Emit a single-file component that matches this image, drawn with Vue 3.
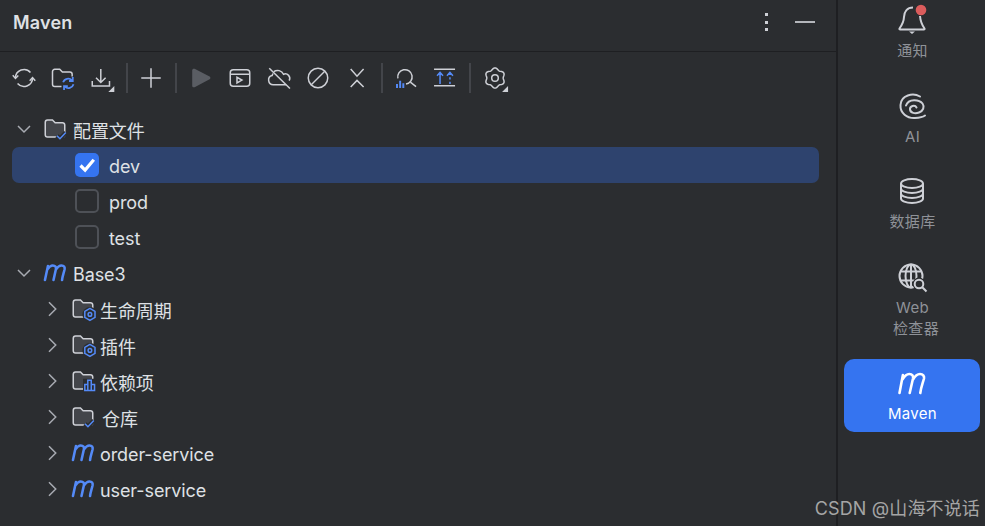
<template>
  <div class="window">
    <section class="panel">
      <header class="panel-head">
        <h1>Maven</h1>
        <div class="dots"><i></i><i></i><i></i></div>
        <div class="minimize"></div>
      </header>

      <div class="toolbar">
        <template v-for="(tool, i) in tools" :key="i">
          <span v-if="tool === '|'" class="sep"></span>
          <button v-else class="tool">
            <svg width="24" height="24" viewBox="0 0 16 16" fill="none" v-html="icons[tool]"></svg>
          </button>
        </template>
      </div>

      <ul class="tree">
        <li v-for="row in rows" :key="row.label" class="row" :class="[`level-${row.level}`, { selected: row.selected }]">
          <svg v-if="row.open !== undefined" class="chevron" width="24" height="24" viewBox="0 0 16 16" fill="none" stroke="#a8abb2" stroke-width="1">
            <path v-if="row.open" d="M4 6l4 4 4-4" />
            <path v-else d="M6 3.500l4.500 4.500-4.500 4.500" />
          </svg>
          <span v-if="row.check !== undefined" class="box" :class="{ on: row.check }">
            <svg v-if="row.check" width="24" height="24" viewBox="0 0 24 24" fill="none" stroke="#fff" stroke-width="3.2">
              <path d="M5.500 12.500l4.600 4.600L18.800 6.800" />
            </svg>
          </span>
          <svg v-if="row.icon" class="node-icon" width="24" height="24" viewBox="0 0 16 16" fill="none" v-html="icons[row.icon]"></svg>
          <span class="label" :class="{ spaced: row.spaced }">{{ row.label }}</span>
        </li>
      </ul>
    </section>

    <aside class="rail">
      <div v-for="item in rail" :key="item.icon" class="rail-item" :class="{ active: item.active }">
        <svg width="28" height="28" viewBox="0 0 28 28" fill="none" v-html="icons[item.icon]"></svg>
        <span v-for="(text, i) in item.lines" :key="i" class="rail-label" :class="{ shifted: i > 0 }">{{ text }}</span>
      </div>
    </aside>

    <div class="watermark">CSDN @山海不说话</div>
  </div>
</template>

<script setup>
const line = `stroke="#ced0d6" stroke-width="1"`;
const blue = `stroke="#548af7" stroke-width="1"`;
const rail2 = `stroke="#ced0d6" stroke-width="2"`;
const folder = `<path d="M1.500 3.500A1.500 1.500 0 0 1 3 2h3.300l1.800 1.800H13a1.500 1.500 0 0 1 1.500 1.500v6.500A1.500 1.500 0 0 1 13 13.300H3a1.500 1.500 0 0 1-1.500-1.500Z" fill="#43454a" stroke="#ced0d6" stroke-width="1"/>`;
const check = `<path d="M9.300 12.500 11.300 14.500 15.200 10.300" stroke="#2b2d30" stroke-width="3"/><path d="M9.300 12.500 11.300 14.500 15.200 10.300" ${blue}/>`;
const moduleM = `M1.300 12.700 3.300 3.400M3 5.600C4 4 5.200 3 6.500 3 8.200 3 8.900 4 8.600 5.500L7 12.700M8.700 5.600C9.700 4 10.900 3 12.300 3 14 3 14.700 4 14.400 5.500 13.700 8.500 12.900 10.500 12.700 12.700`;
const corner = (x, y) => `<path d="M${x} ${y}h4v-4Z" fill="#ced0d6"/>`;

// six-lobed outline for the settings cog
const cog = Array.from({ length: 72 }, (_, i) => {
  const a = (i * Math.PI) / 36;
  const r = 6.1 + 0.65 * Math.cos(6 * a);
  return `${(8 + r * Math.sin(a)).toFixed(2)} ${(8 - r * Math.cos(a)).toFixed(2)}`;
}).join("L");

const badgeGear = `<circle cx="12.600" cy="11.700" r="5" fill="#2b2d30"/><path d="M12.600 7.600l3.400 2v4l-3.400 2-3.400-2v-4Z" stroke-linejoin="round" ${blue}/><circle cx="12.600" cy="11.600" r="1.200" ${blue}/>`;

const icons = {
  reload: `<path d="M2.300 8A5.700 5.700 0 0 1 12.300 4.300M13.700 8A5.700 5.700 0 0 1 3.700 11.700" ${line}/><path d="M.5 6.200 2.300 8.300 4.200 6.300M11.800 9.800 13.700 7.700 15.500 9.800" ${line}/>`,
  folderSync: `<path d="M7 13.700H2.500a1.500 1.500 0 0 1-1.500-1.500V3.700A1.500 1.500 0 0 1 2.500 2.200h3.300l1.800 1.800h5a1.500 1.500 0 0 1 1.500 1.500V7" ${line}/><path d="M8.100 10.800A3.500 3.500 0 0 1 14 9.600M15 12.200A3.500 3.500 0 0 1 9.200 13.800" stroke="#548af7" stroke-width="1.200"/><path d="M14.500 7.400V10H12M8.700 16V13.400H11.200" stroke="#548af7" stroke-width="1.200"/>`,
  download: `<path d="M7.200 2v9M4 7.800 7.200 11 10.400 7.800M1.500 10v3.300h11.500V10" ${line}/>${corner(12.200, 17.300)}`,
  plus: `<path d="M8 1.500v13M1.500 8h13" ${line}/>`,
  play: `<path d="M2.800 2.900c0-.9.900-1.400 1.600-1l10 5.100c.7.400.7 1.500 0 1.900l-10 5.200c-.7.400-1.600-.1-1.600-1Z" fill="#5a5d63"/>`,
  console: `<rect x="1.500" y="2.500" width="13" height="11" rx="2" ${line}/><path d="M1.500 5.500h13" ${line}/><path d="M6 7.500v3.800L9.300 9.400Z" ${line}/>`,
  cloudOff: `<path d="M4.500 3.800A4.300 4.300 0 0 1 11 5.500a3 3 0 0 1 3.800 4.200M12.800 12.500H4.200a3.100 3.100 0 0 1-.8-6.100L4 5" ${line}/><path d="M1.500 1.500l13.800 13.500" ${line}/>`,
  ban: `<circle cx="8" cy="8" r="6.500" ${line}/><path d="M3.500 12.500l9-9" ${line}/>`,
  collapse: `<path d="M3.800 2 8 6.800 12.400 2M3.800 14 8 9.600 12.400 14" ${line}/>`,
  analyze: `<path d="M2.600 8.300A4.800 4.800 0 1 1 8 12" ${line}/><path d="M10.900 10.800l3.800 2.900" ${line}/><path d="M2 14.700V12M4.100 14.700V9.800M6.200 14.700V11.500" stroke="#548af7" stroke-width="1.300"/>`,
  skip: `<path d="M.7 2.200h14M.7 13.100h14" ${line}/><path d="M4.700 12V4.500M2.700 6.500l2-2.200 2 2.200M11.300 12V10.500M11.300 9V7.500M11.300 6V4.500M9.300 6.500l2-2.200 2 2.200" ${blue}/>`,
  settings: `<path d="M${cog}Z" stroke-linejoin="round" ${line}/><circle cx="8" cy="8" r="2.200" ${line}/>${corner(12.700, 17.300)}`,
  profiles: `${folder}${check}`,
  repo: `${folder}${check}`,
  lifecycle: `${folder}${badgeGear}`,
  deps: `${folder}<rect x="8" y="6.500" width="9" height="9" fill="#2b2d30"/><path d="M9.200 14.300v-4h2v4ZM11.200 14.300V7.500h2.300v6.800ZM13.500 14.300v-4h2.200v4Z" ${blue}/>`,
  module: `<path d="${moduleM}" stroke="#548af7" stroke-width="1.700" stroke-linecap="round"/>`,
  bell: `<path d="M15 1.500C9 1.500 6.200 6 6 11c-.2 5-2 8-4.500 11.500-.3.500 0 1 .7 1h23.600c.7 0 1-.5.7-1C24 19 22.500 16 22 10" stroke-linejoin="round" ${rail2}/><path d="M11 25.500h6L14 28Z" fill="#ced0d6"/><circle cx="23" cy="4" r="5.300" fill="#db5c5c"/>`,
  ai: `<path d="M22 4.500C15 .5 3 3 2.500 13 2 21 9 26.500 17 26c4-.2 8-1 10-2.500M18.500 15.500C17 12.500 11.500 14 12 17.500c.5 3.500 5 4.500 9 3 4-1.500 6-5.500 3.500-9C21.500 7.500 10.500 6 8 13.500" stroke-linecap="round" ${rail2}/>`,
  db: `<ellipse cx="14" cy="6.500" rx="11" ry="4.500" ${rail2}/><path d="M3 6.500v15c0 2.500 5 4.500 11 4.500s11-2 11-4.500v-15M3 11.500c0 2.500 5 4.500 11 4.500s11-2 11-4.500M3 16.500c0 2.500 5 4.500 11 4.500s11-2 11-4.500" ${rail2}/>`,
  web: `<circle cx="13" cy="13" r="11.500" ${rail2}/><ellipse cx="13" cy="13" rx="5.500" ry="11.500" ${rail2}/><path d="M13 1.500v23M2.500 8.500h21M2.500 17.500h21" ${rail2}/><circle cx="21" cy="21" r="6.500" fill="#2b2d30"/><circle cx="21" cy="21" r="4.300" ${rail2}/><path d="M24.300 24.300 28.500 28.500" ${rail2}/>`,
  mavenActive: `<path d="M1.500 24 4.900 6M4.600 10.500C6.500 7 9 5 11.300 5 14.300 5 15.500 7 15 9.500L11.700 24M15 10.500C17 7 19.500 5 22 5 25 5 26.500 7 26 9.500 24.500 15 22.800 19 22.300 24" stroke="#fff" stroke-width="2.600" stroke-linecap="round"/>`,
};

const tools = ["reload", "folderSync", "download", "|", "plus", "|", "play", "console", "cloudOff", "ban", "collapse", "|", "analyze", "skip", "|", "settings"];

const rows = [
  { level: 0, open: true, icon: "profiles", label: "配置文件" },
  { level: 2, check: true, label: "dev", selected: true },
  { level: 2, check: false, label: "prod" },
  { level: 2, check: false, label: "test" },
  { level: 0, open: true, icon: "module", label: "Base3" },
  { level: 1, open: false, icon: "lifecycle", label: "生命周期" },
  { level: 1, open: false, icon: "lifecycle", label: "插件" },
  { level: 1, open: false, icon: "deps", label: "依赖项" },
  { level: 1, open: false, icon: "repo", label: "仓库", spaced: true },
  { level: 1, open: false, icon: "module", label: "order-service" },
  { level: 1, open: false, icon: "module", label: "user-service" },
];

const rail = [
  { icon: "bell", lines: ["通知"] },
  { icon: "ai", lines: ["AI"] },
  { icon: "db", lines: ["数据库"] },
  { icon: "web", lines: ["Web", "检查器"] },
  { icon: "mavenActive", lines: ["Maven"], active: true },
];
</script>

<style scoped>
.window {
  position: relative;
  display: flex;
  width: 985px;
  height: 526px;
  overflow: hidden;
  background: #2b2d30;
  color: #dfe1e5;
  font-family: Inter, "Noto Sans CJK SC", sans-serif;
}

svg {
  overflow: visible;
}

.panel {
  width: 836px;
  flex-shrink: 0;
}

.panel-head {
  display: flex;
  align-items: center;
  height: 52px;
  padding: 0 21px 7px 13px;
  box-sizing: border-box;
  border-bottom: 1px solid #1e1f22;
}

.panel-head h1 {
  flex: 1;
  margin: 0;
  font-size: 18px;
  font-weight: 600;
  letter-spacing: .2px;
}

.dots {
  display: flex;
  flex-direction: column;
  gap: 4.5px;
  margin-right: 27px;
}

.dots i {
  width: 3px;
  height: 3px;
  background: #ced0d6;
}

.minimize {
  width: 20px;
  height: 2px;
  background: #b4b6bb;
}

.toolbar {
  display: flex;
  align-items: center;
  height: 52px;
  padding-left: 4px;
}

.tool {
  display: flex;
  justify-content: center;
  width: 39.2px;
  padding: 0;
  border: 0;
  background: none;
}

.sep {
  width: 2px;
  height: 30px;
  margin: 0 4px;
  background: #43454a;
}

.tree {
  margin: 7px 0 0;
  padding: 0;
  list-style: none;
}

.row {
  display: flex;
  align-items: center;
  height: 36px;
  margin: 0 17px 0 12px;
  border-radius: 7px;
  font-size: 18px;
  letter-spacing: -.1px;
}

.row.selected {
  background: #2e436e;
}

.label {
  padding-top: 2px;
}

.level-0 .node-icon {
  margin: 0 6px 0 7px;
}

.level-1 {
  padding-left: 28px;
}

.level-1 .node-icon {
  margin: 0 5px 0 7px;
}

.level-2 {
  padding-left: 63px;
}

.label.spaced {
  margin-left: 2px;
}

.box {
  display: block;
  width: 24px;
  height: 24px;
  margin-right: 10px;
  box-sizing: border-box;
  border: 2px solid #4e5157;
  border-radius: 5px;
}

.box.on {
  border: 0;
  background: #3574f0;
}

.box svg,
.chevron,
.node-icon {
  display: block;
  flex-shrink: 0;
}

.rail {
  display: flex;
  flex-direction: column;
  gap: 12.5px;
  flex: 1;
  margin-top: -4px;
  padding: 0 5px 0 6px;
  border-left: 2px solid #1e1f22;
}

.rail-item {
  display: flex;
  flex-direction: column;
  align-items: center;
  padding: 10px 0 8px;
  border-radius: 10px;
}

.rail-item svg {
  display: block;
  margin-bottom: 7px;
}

.rail-label {
  padding-left: 1px;
  font-size: 15px;
  line-height: 20px;
  letter-spacing: .3px;
  color: #8f9298;
}

.rail-label.shifted {
  padding-left: 8px;
  line-height: 21px;
}

.rail-item.active {
  background: #3574f0;
}

.active .rail-label {
  color: #fff;
}

.watermark {
  position: absolute;
  right: 5px;
  bottom: 6px;
  font-size: 18px;
  line-height: 22px;
  letter-spacing: .15px;
  color: #a5a5a5;
}
</style>
